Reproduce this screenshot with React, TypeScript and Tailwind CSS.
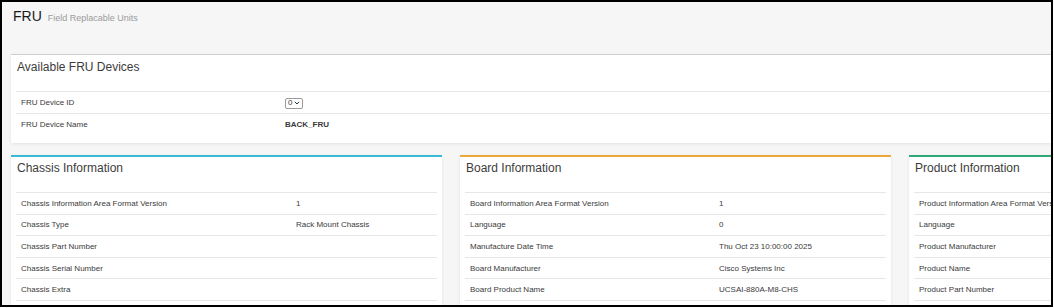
import React from "react";

type Row = { label: string; value?: string };

const CHASSIS: Row[] = [
  { label: "Chassis Information Area Format Version", value: "1" },
  { label: "Chassis Type", value: "Rack Mount Chassis" },
  { label: "Chassis Part Number" },
  { label: "Chassis Serial Number" },
  { label: "Chassis Extra" },
  { label: "" },
];

const BOARD: Row[] = [
  { label: "Board Information Area Format Version", value: "1" },
  { label: "Language", value: "0" },
  { label: "Manufacture Date Time", value: "Thu Oct 23 10:00:00 2025" },
  { label: "Board Manufacturer", value: "Cisco Systems Inc" },
  { label: "Board Product Name", value: "UCSAI-880A-M8-CHS" },
  { label: "" },
];

const PRODUCT: Row[] = [
  { label: "Product Information Area Format Version", value: "1" },
  { label: "Language", value: "0" },
  { label: "Product Manufacturer" },
  { label: "Product Name" },
  { label: "Product Part Number" },
  { label: "" },
];

function InfoCard({
  title,
  rows,
  labelWidth,
  accent,
}: {
  title: string;
  rows: Row[];
  labelWidth: string;
  accent: string;
}) {
  return (
    <div className={`w-[431px] shrink-0 bg-white border-t-2 ${accent} shadow-[0_1px_3px_rgba(0,0,0,0.08)]`}>
      <div className="h-[35px] px-[6px] pt-[4px] text-[12px] leading-[14px] text-[#3c3c3c]">{title}</div>
      <div className="mx-[5px]">
        {rows.map((r, i) => (
          <div key={i} className="flex items-center h-[21.6px] pt-[1px] border-t border-[#e6e6e6] text-[8px] text-[#3a3a3a]">
            <div className={`${labelWidth} shrink-0 px-[5px] whitespace-nowrap`}>{r.label}</div>
            <div className="whitespace-nowrap">{r.value}</div>
          </div>
        ))}
      </div>
    </div>
  );
}

export default function App() {
  return (
    <div className="w-[1054px] h-[308px] bg-white">
      <div className="w-[1053px] h-[307px] border-2 border-black overflow-hidden bg-[#f6f6f6] font-['Liberation_Sans',Arial,sans-serif]">
        {/* page header */}
        <div className="h-[52px] pl-[11px] pt-[6px] flex items-baseline gap-[6px]">
          <span className="text-[14px] leading-[16px] text-[#1a1a1a]">FRU</span>
          <span className="text-[9px] text-[#9a9a9a]">Field Replacable Units</span>
        </div>

        {/* available devices */}
        <div className="ml-[9px] w-[1100px] bg-white border-t border-[#cfcfcf] pb-[8px] shadow-[0_1px_3px_rgba(0,0,0,0.08)]">
          <div className="h-[36px] px-[6px] pt-[5px] text-[12px] leading-[14px] text-[#3c3c3c]">Available FRU Devices</div>
          <div className="mx-[5px]">
            <div className="flex items-center h-[22px] pt-[1px] border-t border-[#e6e6e6] text-[8px] text-[#3a3a3a]">
              <div className="w-[269px] shrink-0 px-[5px]">FRU Device ID</div>
              <div className="flex items-center gap-[2px] h-[11px] px-[2px] border border-[#9a9a9a] rounded-[2px] text-[8px] leading-none">
                <span>0</span>
                <svg width="6" height="4" viewBox="0 0 6 4" fill="none">
                  <path d="M0.8 0.8 L3 3 L5.2 0.8" stroke="#333" strokeWidth="1" />
                </svg>
              </div>
            </div>
            <div className="flex items-center h-[22px] pt-[1px] border-t border-[#e6e6e6] text-[8px] text-[#3a3a3a]">
              <div className="w-[269px] shrink-0 px-[5px]">FRU Device Name</div>
              <div className="font-bold">BACK_FRU</div>
            </div>
          </div>
        </div>

        {/* info cards */}
        <div className="mt-[12px] ml-[9px] flex gap-[18px]">
          <InfoCard title="Chassis Information" rows={CHASSIS} labelWidth="w-[280px]" accent="border-[#3bbad3]" />
          <InfoCard title="Board Information" rows={BOARD} labelWidth="w-[254px]" accent="border-[#eaa73a]" />
          <InfoCard title="Product Information" rows={PRODUCT} labelWidth="w-[280px]" accent="border-[#2fa776]" />
        </div>
      </div>
    </div>
  );
}
